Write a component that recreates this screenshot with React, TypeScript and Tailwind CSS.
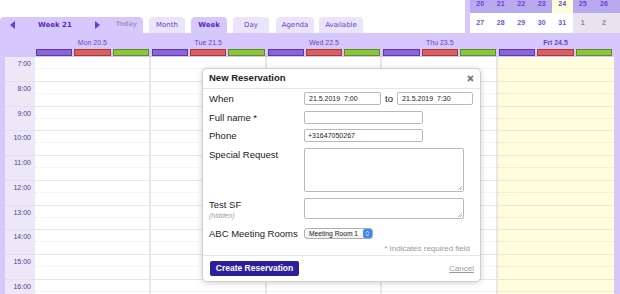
import React from "react";

const days = [
  { label: "Mon 20.5", bold: false, today: false },
  { label: "Tue 21.5", bold: false, today: false },
  { label: "Wed 22.5", bold: false, today: false },
  { label: "Thu 23.5", bold: false, today: false },
  { label: "Fri 24.5", bold: true, today: true },
];
const hours = ["7:00", "8:00", "9:00", "10:00", "11:00", "12:00", "13:00", "14:00", "15:00", "16:00"];

function Bars() {
  return (
    <div className="flex gap-[2px] h-[7px]">
      <div className="flex-1 bg-[#8c64d8] border border-[#5a3aa6]" />
      <div className="flex-1 bg-[#d9605e] border border-[#a8393a]" />
      <div className="flex-1 bg-[#8cc43e] border border-[#5f8c25]" />
    </div>
  );
}

function Tri({ dir }: { dir: "l" | "r" }) {
  return (
    <svg width="5" height="8" viewBox="0 0 5 8">
      {dir === "l" ? <path d="M5 0 L0 4 L5 8 Z" fill="#6a3fcc" /> : <path d="M0 0 L5 4 L0 8 Z" fill="#6a3fcc" />}
    </svg>
  );
}

function Grip() {
  return (
    <svg className="absolute right-[1px] bottom-[1px]" width="5" height="5" viewBox="0 0 5 5">
      <path d="M1 5 L5 1 M3 5 L5 3" stroke="#999" strokeWidth="0.7" />
    </svg>
  );
}

const row1 = ["20", "21", "22", "23", "24", "25", "26"];
const row2 = ["27", "28", "29", "30", "31", "1", "2"];

export default function App() {
  return (
    <div className="relative w-[620px] h-[294px] overflow-hidden bg-white font-['Liberation_Sans',Arial,sans-serif]">
      {/* top row */}
      <div className="flex h-[33px]">
        <div className="flex-1 flex items-end gap-[6px] font-['DejaVu_Sans',Verdana,sans-serif] text-[7px] text-[#6a3fcc]">
          <div className="w-[143px] h-[16px] bg-[#d6c8fc] rounded-t-[4px] flex items-center">
            <div className="ml-[10px] w-[5px] flex"><Tri dir="l" /></div>
            <span className="ml-[23px] font-bold text-[#5b2db8]">Week 21</span>
            <div className="ml-[23px] w-[5px] flex"><Tri dir="r" /></div>
            <span className="ml-[16px] font-bold text-[6.5px] text-[#a39cbc]">Today</span>
          </div>
          <div className="w-[36px] h-[16px] bg-[#ebe5fc] rounded-t-[4px] flex items-center justify-center">Month</div>
          <div className="w-[36px] h-[16px] bg-[#d6c8fc] rounded-t-[4px] flex items-center justify-center font-bold text-[#5b2db8]">Week</div>
          <div className="w-[36px] h-[16px] bg-[#ebe5fc] rounded-t-[4px] flex items-center justify-center">Day</div>
          <div className="w-[38px] h-[16px] bg-[#ebe5fc] rounded-t-[4px] flex items-center justify-center ml-[1px]">Agenda</div>
          <div className="w-[44px] h-[16px] bg-[#ebe5fc] rounded-t-[4px] flex items-center justify-center -ml-[1px]">Available</div>
        </div>
        {/* mini calendar */}
        <div className="w-[155px] h-[33px] bg-[#d6c8fc] pl-[5px] flex flex-col text-[7px] font-bold">
          <div className="h-[13px] grid grid-cols-[repeat(6,20.5px)_1fr] bg-[#b9aaef] text-[#6d3fd4]">
            {row1.map((d) => (
              <div key={d} className={`flex justify-center leading-[8px] ${d === "24" ? "bg-[#fdfdd8]" : ""} ${d === "26" ? "pr-[5px]" : ""}`}>{d}</div>
            ))}
          </div>
          <div className="h-[20px] grid grid-cols-[repeat(6,20.5px)_1fr]">
            {row2.map((d, i) => (
              <div key={d} className={`flex items-center justify-center pt-[1px] ${i >= 5 ? "bg-[#e7e4ef] text-[#8a80ad]" : "bg-white text-[#7a4fd8]"} ${d === "2" ? "pr-[5px]" : ""}`}>{d}</div>
            ))}
          </div>
        </div>
      </div>

      {/* header band */}
      <div className="grid grid-cols-[35px_repeat(5,1fr)_6px] h-[24px] bg-[#d6c8fc]">
        <div />
        {days.map((d) => (
          <div key={d.label} className="pl-[1px] pr-[2px] pt-[6px]">
            <div className={`text-center text-[7px] leading-[8px] text-[#6a3fcc] ${d.bold ? "font-bold" : ""}`}>{d.label}</div>
            <div className="mt-[2px]"><Bars /></div>
          </div>
        ))}
        <div />
      </div>

      {/* body grid */}
      <div className="grid grid-cols-[5px_30px_repeat(5,1fr)_6px]">
        <div className="bg-[#d6c8fc]" />
        <div className="bg-[#ece8f7]">
          {hours.map((h) => (
            <div key={h} className="h-[24.75px] border-b border-dotted border-[#dcd6ec] text-right pr-[4px] pt-[3px] text-[7px] leading-[8px] text-[#4e3f8f]">{h}</div>
          ))}
        </div>
        {days.map((d, i) => (
          <div key={d.label} className={`${d.today ? "bg-[#fefedf]" : "bg-white"} ${i < 4 ? "border-r-2 border-[#e7e7e7]" : ""}`}>
            {hours.map((h) => (
              <div key={h} className={`h-[24.75px] border-b ${d.today ? "border-[#e9e9d2]" : "border-[#e6e6e6]"}`}>
                <div className={`h-[12px] border-b border-dotted ${d.today ? "border-[#e4e4cc]" : "border-[#ececec]"}`} />
              </div>
            ))}
          </div>
        ))}
        <div className="bg-[#d6c8fc]" />
      </div>

      {/* dialog */}
      <div className="absolute left-[202px] top-[68px] w-[279px] bg-white border border-[#cfcfcf] rounded-[5px] shadow-[0_1px_6px_rgba(0,0,0,0.18)] text-[#222]">
        <div className="h-[20px] flex items-center justify-between pl-[6px] pr-[6px] border-b border-[#e6e6e6]">
          <span className="text-[9.5px] font-bold">New Reservation</span>
          <svg width="7" height="7" viewBox="0 0 7 7">
            <path d="M1 1 L6 6 M6 1 L1 6" stroke="#7a7a7a" strokeWidth="1.8" />
          </svg>
        </div>
        <div className="pl-[6px]">
          <div className="mt-[3px] flex h-[13px] items-start">
            <div className="w-[95px] text-[9.5px] leading-[13px]">When</div>
            <div className="w-[77px] h-[13px] border border-[#b8b8b8] rounded-[2px] text-[7px] leading-[11px] pl-[4px] whitespace-pre">21.5.2019  7:00</div>
            <div className="w-[16px] text-center text-[9.5px] leading-[13px]">to</div>
            <div className="w-[76px] h-[13px] border border-[#b8b8b8] rounded-[2px] text-[7px] leading-[11px] pl-[4px] whitespace-pre">21.5.2019  7:30</div>
          </div>
          <div className="mt-[6px] flex h-[13px] items-start">
            <div className="w-[95px] text-[9.5px] leading-[13px]">Full name *</div>
            <div className="w-[119px] h-[13px] border border-[#b8b8b8] rounded-[2px]" />
          </div>
          <div className="mt-[5px] flex h-[13px] items-start">
            <div className="w-[95px] text-[9.5px] leading-[13px]">Phone</div>
            <div className="w-[119px] h-[13px] border border-[#b8b8b8] rounded-[2px] text-[7px] leading-[11px] pl-[3px]">+31647050267</div>
          </div>
          <div className="mt-[6px] flex h-[44px] items-start">
            <div className="w-[95px] text-[9.5px] leading-[13px]">Special Request</div>
            <div className="relative w-[160px] h-[44px] border border-[#b8b8b8] rounded-[2px]"><Grip /></div>
          </div>
          <div className="mt-[6px] flex h-[21px] items-start">
            <div className="w-[95px]">
              <div className="text-[9.5px] leading-[13px]">Test SF</div>
              <div className="text-[7px] leading-[9px] italic text-[#a0a0a0]">(hidden)</div>
            </div>
            <div className="relative w-[160px] h-[21px] border border-[#b8b8b8] rounded-[2px]"><Grip /></div>
          </div>
          <div className="mt-[9px] flex h-[11px] items-center">
            <div className="w-[95px] text-[9.5px] leading-[13px]">ABC Meeting Rooms</div>
            <div className="w-[69px] h-[11px] border border-[#b0b0b0] rounded-[3px] bg-gradient-to-b from-white to-[#efefef] flex items-center justify-between pl-[4px] pr-[0px]">
              <span className="text-[6.7px] leading-[9px] text-[#222]">Meeting Room 1</span>
              <div className="w-[9px] h-[9px] bg-[#3f87f2] rounded-[2px] flex items-center justify-center">
                <svg width="5" height="7" viewBox="0 0 5 7">
                  <path d="M1 2.8 L2.5 1.2 L4 2.8 M1 4.2 L2.5 5.8 L4 4.2" stroke="white" strokeWidth="0.9" fill="none" />
                </svg>
              </div>
            </div>
          </div>
        </div>
        <div className="mt-[5px] pr-[10px] text-right text-[8px] leading-[9px] text-[#9a9a9a]">* Indicates required field</div>
        <div className="mt-[2px] border-t border-[#e6e6e6] h-[26px] flex items-start justify-between pl-[7px] pr-[6px] pt-[5px]">
          <div className="w-[89px] h-[15px] bg-[#2b1f9e] rounded-[2px] text-white text-[8.5px] font-bold flex items-center justify-center">Create Reservation</div>
          <span className="mt-[3px] text-[8px] leading-[9px] text-[#9a9a9a] underline">Cancel</span>
        </div>
      </div>
    </div>
  );
}
